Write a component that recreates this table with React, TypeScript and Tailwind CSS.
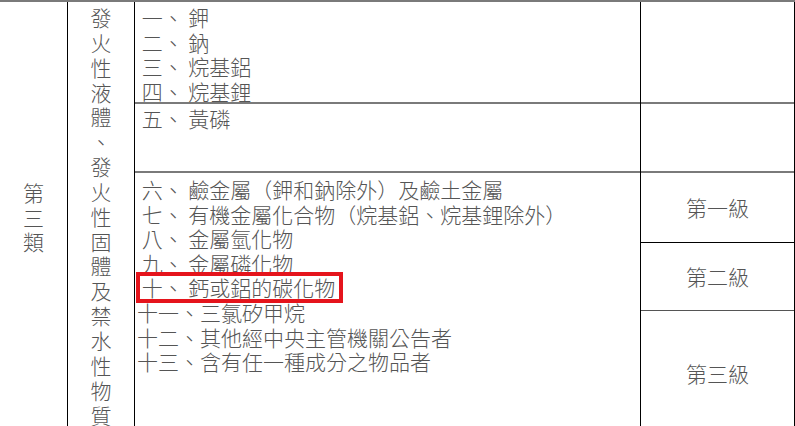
const font = "font-['Noto_Sans_CJK_TC','Noto_Sans_CJK_SC',sans-serif]";

const SIDE_LABEL = "發火性液體、發火性固體及禁水性物質".split("");

const GROUP_A = [" 一、 鉀", " 二、 鈉", " 三、 烷基鋁", " 四、 烷基鋰"];

const GROUP_C = [
  " 六、 鹼金屬（鉀和鈉除外）及鹼土金屬",
  " 七、 有機金屬化合物（烷基鋁、烷基鋰除外）",
  " 八、 金屬氫化物",
  " 九、 金屬磷化物",
];

const GROUP_C_TAIL = [
  "十一、三氯矽甲烷",
  "十二、其他經中央主管機關公告者",
  "十三、含有任一種成分之物品者",
];

const Line = ({ text }: { text: string }) => (
  <div className="whitespace-pre leading-[24.6px]">{text}</div>
);

export default function App() {
  return (
    <div className="h-[426px] w-[795px] overflow-hidden bg-white">
      <div
        className={`flex h-[434px] border-t-2 border-[#7a7a7a] text-[21px] font-light text-[#555] ${font}`}
      >
        {/* 類別 */}
        <div className="flex w-[68px] shrink-0 flex-col items-center justify-center border-r border-black pb-[2px] leading-[24.6px]">
          <span>第</span>
          <span>三</span>
          <span>類</span>
        </div>

        {/* 名稱 */}
        <div className="flex w-[67px] shrink-0 flex-col items-center border-r border-black pt-[3px] leading-[24.85px]">
          {SIDE_LABEL.map((ch, i) => (
            <span key={i}>{ch}</span>
          ))}
        </div>

        {/* 品名 */}
        <div className="flex w-[506px] shrink-0 flex-col border-r border-black">
          <div className="h-[102px] border-b-2 border-[#7a7a7a] pl-[2px] pt-[3px]">
            {GROUP_A.map((t) => (
              <Line key={t} text={t} />
            ))}
          </div>
          <div className="h-[69px] border-b-2 border-[#7a7a7a] pl-[2px] pt-[2px]">
            <Line text=" 五、 黃磷" />
          </div>
          <div className="flex-1 pl-[2px] pt-[4px]">
            {GROUP_C.map((t) => (
              <Line key={t} text={t} />
            ))}
            <div className="relative">
              <Line text=" 十、 鈣或鋁的碳化物" />
              <div className="absolute left-[-1.5px] top-[-3.5px] h-[31px] w-[207px] border-4 border-[#e5141c]" />
            </div>
            {GROUP_C_TAIL.map((t) => (
              <Line key={t} text={t} />
            ))}
          </div>
        </div>

        {/* 分級 */}
        <div className="flex w-[154px] shrink-0 flex-col border-r border-black">
          <div className="h-[102px] shrink-0 border-b-2 border-[#7a7a7a]" />
          <div className="h-[69px] shrink-0 border-b-2 border-[#7a7a7a]" />
          <div className="flex h-[70px] shrink-0 items-center justify-center border-b border-black">
            第一級
          </div>
          <div className="flex h-[68px] shrink-0 items-center justify-center border-b border-[#555]">
            第二級
          </div>
          <div className="flex flex-1 items-center justify-center pt-[2px]">
            第三級
          </div>
        </div>
      </div>
    </div>
  );
}
